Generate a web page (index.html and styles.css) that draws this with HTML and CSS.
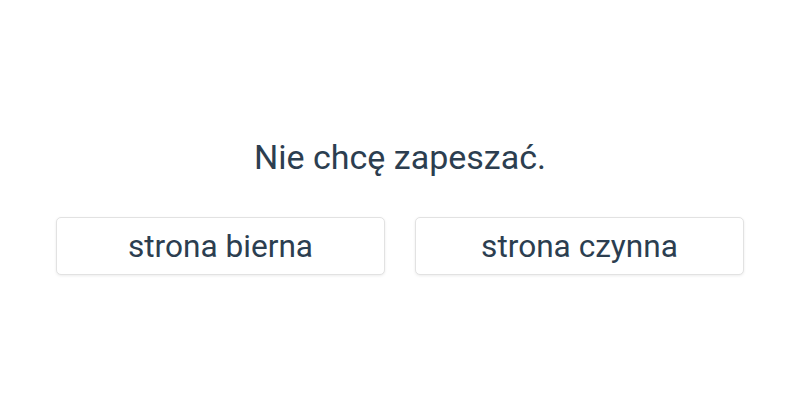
FILE: index.html
```html
<!DOCTYPE html>
<html>
<head>
<meta charset="utf-8">
<link rel="stylesheet" href="styles.css">
</head>
<body>
<main class="quiz">
  <h1 class="question">Nie chcę zapeszać.</h1>
  <div class="options">
    <button class="option">strona bierna</button>
    <button class="option">strona czynna</button>
  </div>
</main>
</body>
</html>
```

FILE: styles.css
```css
html, body {
  margin: 0;
  padding: 0;
  background: #fff;
}
body {
  font-family: Roboto, "Noto Sans", sans-serif;
  color: #2c3e50;
}
.quiz {
  height: 400px;
  box-sizing: border-box;
  padding-top: 12px;
  display: flex;
  flex-direction: column;
  align-items: center;
  justify-content: center;
}
.question {
  margin: 0 0 40px;
  font-size: 34px;
  font-weight: 400;
  line-height: 40px;
}
.options {
  display: flex;
  gap: 30px;
}
.option {
  width: 329px;
  height: 58px;
  border: 1px solid #e2e2e2;
  border-radius: 5px;
  background: #fff;
  box-shadow: 0 1px 3px rgba(0,0,0,0.08);
  font-family: inherit;
  font-size: 31.6px;
  color: #2c3e50;
  padding: 0;
}
```
